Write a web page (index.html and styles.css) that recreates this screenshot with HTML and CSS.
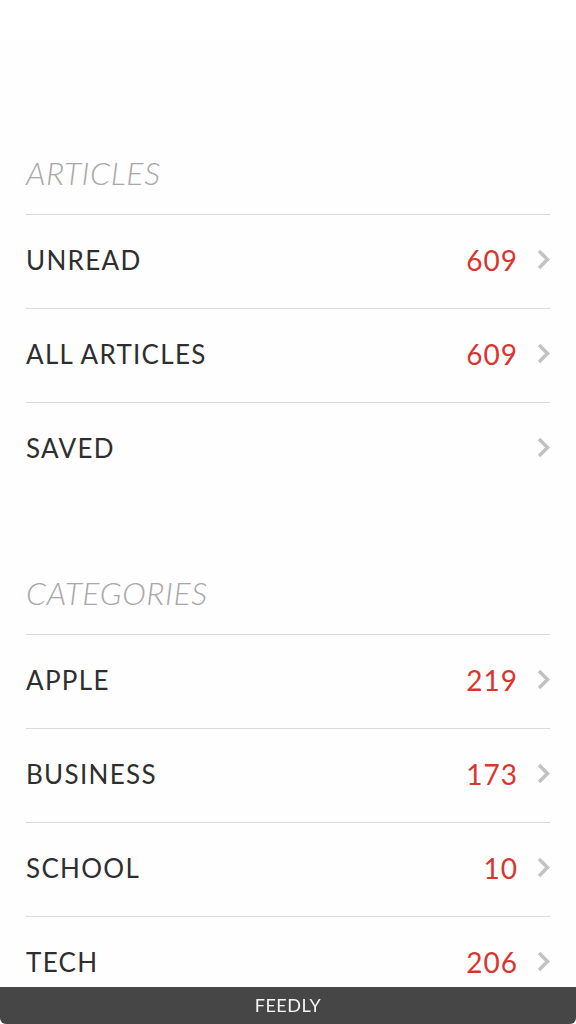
FILE: index.html
```html
<!DOCTYPE html>
<html lang="en">
<head>
  <meta charset="UTF-8" />
  <meta name="viewport" content="width=device-width, initial-scale=1.0" />
  <title>Feedly</title>
  <link rel="stylesheet" href="styles.css">
</head>
<body>
  <div class="status-bar"></div>
  <main class="menu">
    <section class="group">
      <h2 class="group-title">ARTICLES</h2>
      <a class="row" href="#"><span class="label">UNREAD</span><span class="count">609</span><svg class="chevron" viewBox="0 0 13 21"><polyline points="2,2 10.5,10.5 2,19" /></svg></a>
      <a class="row" href="#"><span class="label">ALL ARTICLES</span><span class="count">609</span><svg class="chevron" viewBox="0 0 13 21"><polyline points="2,2 10.5,10.5 2,19" /></svg></a>
      <a class="row" href="#"><span class="label">SAVED</span><span class="count"></span><svg class="chevron" viewBox="0 0 13 21"><polyline points="2,2 10.5,10.5 2,19" /></svg></a>
    </section>
    <section class="group">
      <h2 class="group-title">CATEGORIES</h2>
      <a class="row" href="#"><span class="label">APPLE</span><span class="count">219</span><svg class="chevron" viewBox="0 0 13 21"><polyline points="2,2 10.5,10.5 2,19" /></svg></a>
      <a class="row" href="#"><span class="label">BUSINESS</span><span class="count">173</span><svg class="chevron" viewBox="0 0 13 21"><polyline points="2,2 10.5,10.5 2,19" /></svg></a>
      <a class="row" href="#"><span class="label">SCHOOL</span><span class="count">10</span><svg class="chevron" viewBox="0 0 13 21"><polyline points="2,2 10.5,10.5 2,19" /></svg></a>
      <a class="row" href="#"><span class="label">TECH</span><span class="count">206</span><svg class="chevron" viewBox="0 0 13 21"><polyline points="2,2 10.5,10.5 2,19" /></svg></a>
    </section>
  </main>
  <footer class="tab-bar">FEEDLY</footer>
</body>
</html>
```

FILE: styles.css
```css
:root {
  --bg-color: #fefefe;
  --text-color: #2e2e2e;
  --muted: #a8a8a8;
  --accent: #d9352f;
  --rule: #d9d9d9;
  --chevron: #c2c2c2;
}

body {
  margin: 0;
  padding: 0;
  height: 1024px;
  overflow: hidden;
  background-color: var(--bg-color);
  color: var(--text-color);
  font-family: Lato, "Open Sans", sans-serif;
}
.status-bar {
  height: 40px;
  background-color: #fff;
}
.menu {
  padding: 0 26px;
}
.group-title {
  margin: 0;
  height: 138px;
  display: flex;
  align-items: flex-end;
  padding-bottom: 22px;
  box-sizing: border-box;
  font-size: 32px;
  font-weight: 300;
  font-style: italic;
  letter-spacing: 0.6px;
  color: var(--muted);
}
.group:first-child .group-title {
  height: 174px;
}
.row {
  display: flex;
  align-items: center;
  height: 94px;
  padding-bottom: 4px;
  box-sizing: border-box;
  border-top: 1px solid var(--rule);
  text-decoration: none;
  color: inherit;
}
.label {
  flex: 1;
  font-size: 26px;
  letter-spacing: 1.3px;
}
.count {
  font-size: 28px;
  letter-spacing: 1px;
  color: var(--accent);
  margin-right: 19px;
}
.chevron {
  width: 13px;
  height: 21px;
  fill: none;
  stroke: var(--chevron);
  stroke-width: 3.5;
}
.tab-bar {
  position: fixed;
  left: 0;
  right: 0;
  bottom: 0;
  height: 37px;
  background-color: rgba(60, 60, 60, 0.95);
  border-radius: 0 0 6px 6px;
  color: #f5f5f5;
  font-size: 18px;
  letter-spacing: 0.5px;
  text-align: center;
  line-height: 37px;
}
```
